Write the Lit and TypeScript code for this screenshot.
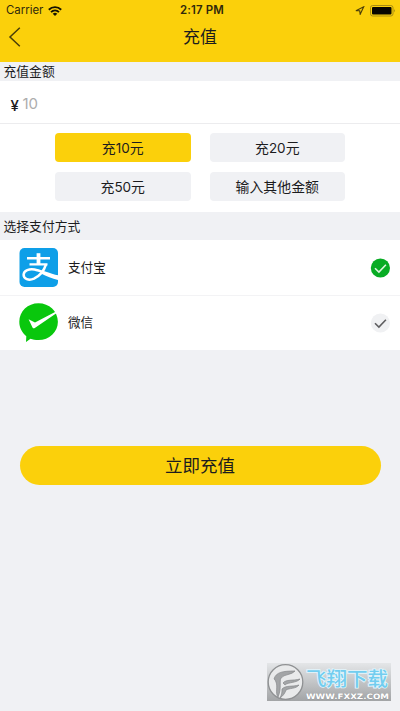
import { LitElement, html, css, svg } from "lit";
import { customElement, state } from "lit/decorators.js";
import { classMap } from "lit/directives/class-map.js";

const alipay = svg`<svg class="logo" viewBox="0 0 39 39">
  <rect x=".5" width="38.5" height="39" rx="5" fill="#0e9fe8"/>
  <g fill="none" stroke="#fff">
    <path d="M8 10.3H31M10.5 16.4H28.5" stroke-width="2.4"/>
    <path d="M19.5 5.2V16.5" stroke-width="3.8"/>
    <path d="M27 16.4C25 23 20.5 28 15 30.7C9.5 33 4.6 30.8 4.6 26.8C4.7 22.3 10.5 20.6 15.5 21.5C22 22.8 29 26.4 39 28.6" stroke-width="2.5"/>
  </g>
  <path d="M23 23.6C28 25.5 33 27.2 39 27.7V32C33 30.6 27.5 28.2 22 25.4Z" fill="#fff"/>
</svg>`;

const wechat = svg`<svg class="logo up" viewBox="0 0 39 39">
  <path d="M19.5 .3C30.2 .3 38.9 8.4 38.9 18.7S30.2 37.1 19.5 37.1C16.4 37.1 13.6 36.5 11.5 35.7L7 38.9L7.3 33.2C3 29.600 .3 24.500 .3 18.700C.3 8.400 8.800 .3 19.500 .3Z" fill="#09c70d"/>
  <path d="M9.600 16.200L16 19.400L37 8.400V10.400L15.800 24.900C14.900 25.500 14 25.300 13.500 24.400Z" fill="#fff"/>
</svg>`;

@customElement("app-root")
export class AppRoot extends LitElement {
  @state() private amount = 0;
  @state() private method = 0;

  static styles = css`
    :host { display: flex; flex-direction: column; position: relative; height: 711px; overflow: hidden; background: #f0f1f4; color: #1c1c1e; font-family: "Liberation Sans", "Noto Sans CJK SC", sans-serif; }
    * { box-sizing: border-box; }
    svg { display: block; flex: none; }
    header { height: 62px; background: #fbd00b; flex: none; }
    .status { height: 20px; display: grid; grid-template-columns: 1fr auto 1fr; align-items: center; padding: 1px 4px 0 6px; font: 11.4px/19px Inter, sans-serif; color: #30290b; }
    .left, .right { display: flex; align-items: center; gap: 5px; }
    .right { justify-content: flex-end; }
    .time { font-weight: 600; font-size: 11.4px; letter-spacing: .18px; padding-left: 2px; }
    .nav { height: 33px; display: grid; grid-template-columns: 40px 1fr 40px; align-items: center; }
    .back { padding-left: 8px; }
    h1 { margin: 0; padding-top: 2px; text-align: center; font-size: 17px; line-height: 32px; font-weight: 400; }
    .label { flex: none; padding-left: 3.5px; font-size: 12.8px; line-height: 20px; height: 19px; }
    .label.tall { height: 28px; line-height: 30px; }
    .amount { height: 43px; flex: none; display: flex; align-items: center; padding-left: 10.5px; background: #fff; border-bottom: 1px solid #ececee; }
    .yen { width: 12px; font: 500 15px/20px Inter, sans-serif; margin-top: 7px; }
    .value { font: 15px/20px Inter, sans-serif; letter-spacing: -.2px; color: #adadad; margin-top: 3px; }
    .choices { flex: none; height: 88px; background: #fff; padding: 9px 55px 0; display: grid; grid-template-columns: 135.500px 135.500px; grid-auto-rows: 29px; column-gap: 19px; row-gap: 10px; }
    .choice { border-radius: 4px; background: #f0f1f4; text-align: center; font-size: 13.9px; line-height: 31px; white-space: nowrap; }
    .choice.on { background: #fbd00b; }
    .digits { font-family: Inter, sans-serif; font-size: 13.5px; }
    .method { flex: none; height: 55px; display: flex; align-items: center; padding: 0 10px 0 19px; background: #fff; }
    .method + .method { border-top: 1px solid #f3f3f5; }
    .logo { width: 39px; height: 39px; }
    .logo.up { margin-top: -2px; }
    .name { flex: 1; padding-left: 10px; font-size: 12.6px; line-height: 20px; }
    .tick { fill: #f0f1f3; stroke: #5e5e60; }
    .tick.on { fill: #08ac24; stroke: #dcf5df; }
    .submit { flex: none; margin: 96px 19.500px 0; height: 39px; border-radius: 20px; background: #fbd00b; text-align: center; font-size: 17.5px; line-height: 40px; }
    .mark { position: absolute; left: 266px; top: 662px; width: 126px; height: 40px; }
    .brand { font: 500 19px "Noto Sans CJK SC", sans-serif; fill: #72cdef; stroke: #e3f6fd; stroke-width: 1.6px; paint-order: stroke; }
    .url { font: 700 7.400px "DejaVu Sans", sans-serif; fill: #fff; stroke: #909496; stroke-width: .5px; paint-order: stroke; }
  `;

  private tick(on: boolean) {
    return html`<svg class=${classMap({ tick: true, on })} width="20" height="20" viewBox="0 0 20 20">
      <circle cx="10.400" cy="10" r="9.600" stroke="none"/><path d="M5 10.200L8.900 14L15.900 6.700" fill="none" stroke-width="1.600"/>
    </svg>`;
  }

  render() {
    const choices = [html`充<span class="digits">10</span>元`, html`充<span class="digits">20</span>元`, html`充<span class="digits">50</span>元`, html`输入其他金额`];
    const methods = [{ name: "支付宝", logo: alipay }, { name: "微信", logo: wechat }];
    return html`
      <header>
        <div class="status">
          <div class="left">Carrier
            <svg width="14" height="10" viewBox="0 0 14 10"><g fill="none" stroke="#151202" stroke-width="1.900"><path d="M.8 3.700C4.300 .3 9.700 .3 13.200 3.700M3 6.100C5.300 3.900 8.700 3.900 11 6.100"/></g><path d="M4.700 7.700Q7 5.700 9.300 7.700L7 10Z" fill="#151202"/></svg>
          </div>
          <div class="time">2:17 PM</div>
          <div class="right">
            <svg width="10" height="9" viewBox="0 0 10 9"><path d="M.9 4.700L8.700 .8L5.200 8.300L4.700 4.800Z" fill="none" stroke="#4b3e08" stroke-width="1.100"/></svg>
            <svg width="26" height="12" viewBox="0 0 26 12"><rect x=".5" y=".5" width="22.500" height="10.500" rx="2.200" fill="none" stroke="#a98d12"/><rect x="2" y="2" width="19.500" height="7.500" rx="1" fill="#090700"/><path d="M24 4Q25.500 5.700 24 7.500Z" fill="#8f7710"/></svg>
          </div>
        </div>
        <div class="nav">
          <div class="back"><svg width="13" height="20" viewBox="0 0 13 20"><path d="M11.800 .8L2 10L11.800 19.200" fill="none" stroke="#4a3d08" stroke-width="1.500"/></svg></div>
          <h1>充值</h1>
        </div>
      </header>
      <div class="label">充值金额</div>
      <div class="amount"><span class="yen">¥</span><span class="value">10</span></div>
      <div class="choices">
        ${choices.map((c, i) => html`<div class=${classMap({ choice: true, on: i === this.amount })} @click=${() => (this.amount = i)}>${c}</div>`)}
      </div>
      <div class="label tall">选择支付方式</div>
      ${methods.map((m, i) => html`<div class="method" @click=${() => (this.method = i)}>${m.logo}<span class="name">${m.name}</span>${this.tick(i === this.method)}</div>`)}
      <div class="submit">立即充值</div>
      <svg class="mark" viewBox="0 0 126 40">
        <defs><linearGradient id="bg" x2="0" y2="1"><stop offset="0" stop-color="#e4e6e8"/><stop offset="1" stop-color="#a2a4a6"/></linearGradient></defs>
        <rect x="1" y="1" width="124" height="38" fill="url(#bg)"/>
        <circle cx="19.500" cy="20" r="17.300" fill="#e9eaeb" stroke="#8f9193" stroke-width="1.300"/>
        <path d="M8 17C10 10 17 9 29 9C26 13 18 12 15 16C13 19 16 26 12 35C9 31 12 25 10 20Q9 17 8 17ZM17 21C20 17 27 19 34 17C31 21 22 20 19 23ZM16 27C20 23 26 25 33 23C30 27 23 26 20 28C19 31 17 34 14 36C16 32 16 30 16 27Z" fill="#a3a5a7" stroke="#85878a" stroke-width=".7"/>
        <text class="brand" x="40" y="23.500" textLength="82" lengthAdjust="spacingAndGlyphs">飞翔下载</text>
        <text class="url" x="40" y="36.500" textLength="83" lengthAdjust="spacingAndGlyphs">WWW.FXXZ.COM</text>
      </svg>
    `;
  }
}
